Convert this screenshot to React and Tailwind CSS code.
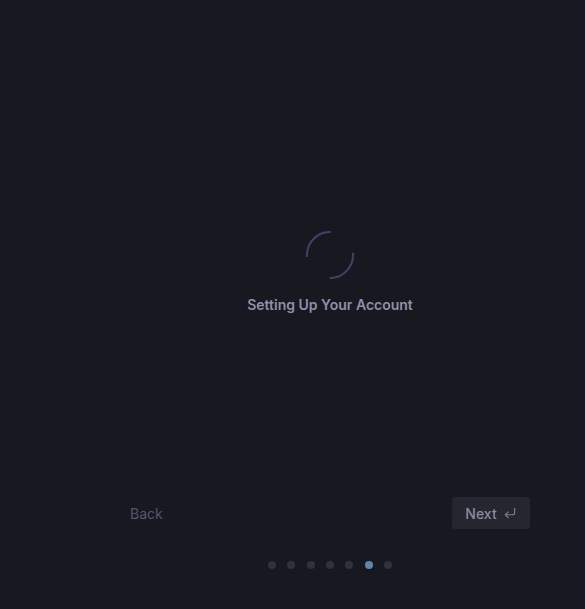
import { CornerDownLeft } from "lucide-react";

const steps = [0, 1, 2, 3, 4, 5, 6];
const current = 5;

const Spinner = () => (
  <svg width="50" height="50" viewBox="0 0 50 50" className="rotate-[-4deg]">
    <circle
      cx="25"
      cy="25"
      r="23"
      fill="none"
      stroke="#3a4566"
      strokeWidth="2"
      strokeLinecap="round"
      strokeDasharray="37 35.3"
    />
  </svg>
);

export default function App() {
  return (
    <div
      className="min-h-[609px] w-full bg-[#181820] flex"
      style={{ fontFamily: "Inter, 'Noto Sans', sans-serif" }}
    >
      <div className="ml-[130px] w-[400px] flex flex-col">
        <div className="h-[497px] flex flex-col items-center pt-[230px]">
          <Spinner />
          <p className="mt-[16px] text-[14px] font-semibold text-[#8f90aa] leading-[18px]">
            Setting Up Your Account
          </p>
        </div>
        <div className="flex items-center justify-between h-[32px]">
          <button className="text-[14px] text-[#55566b]">Back</button>
          <button className="h-[32px] w-[78px] rounded-[3px] bg-[#262630] flex items-center justify-center gap-[6px] text-[14px] font-medium text-[#8a8b9e]">
            Next
            <CornerDownLeft size={14} strokeWidth={2} className="text-[#7d7e92]" />
          </button>
        </div>
        <div className="flex justify-center gap-[11.3px] mt-[32px]">
          {steps.map((s) => (
            <span
              key={s}
              className={
                s === current
                  ? "w-[8px] h-[8px] rounded-full bg-[#5b86ad]"
                  : "w-[8px] h-[8px] rounded-full bg-[#30313c]"
              }
            />
          ))}
        </div>
      </div>
    </div>
  );
}
